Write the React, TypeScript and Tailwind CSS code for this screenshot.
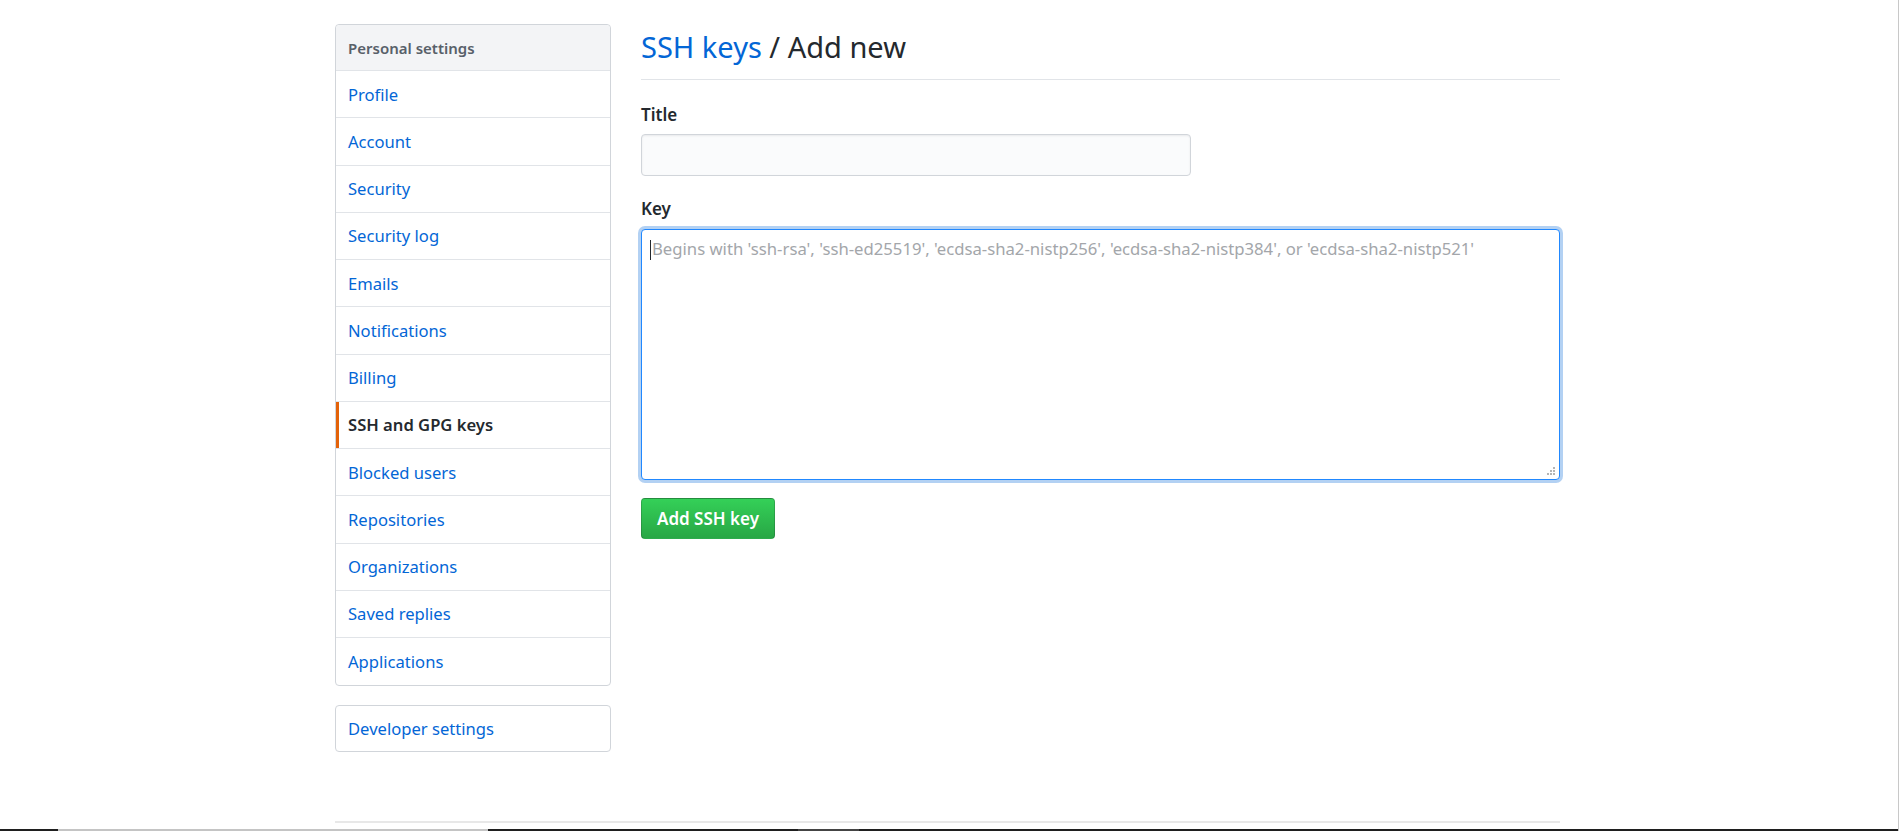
import React from 'react';

const menuItems = [
  'Profile',
  'Account',
  'Security',
  'Security log',
  'Emails',
  'Notifications',
  'Billing',
  'SSH and GPG keys',
  'Blocked users',
  'Repositories',
  'Organizations',
  'Saved replies',
  'Applications',
];

const font = { fontFamily: '"Segoe UI", "Noto Sans", Roboto, sans-serif' };

const Sidebar: React.FC = () => {
  return (
    <div className="w-[276px] shrink-0">
      <nav className="rounded-[4px] border border-[#d1d5da] bg-white">
        <div className="flex h-[46px] items-center rounded-t-[4px] border-b border-[#e1e4e8] bg-[#f3f4f6] pl-[12px] pt-[2px] text-[15px] font-semibold text-[#586069]">
          Personal settings
        </div>
        {menuItems.map((item, i) => {
          const active = item === 'SSH and GPG keys';
          return (
            <div
              key={item}
              className={`relative flex h-[47.25px] items-center pl-[12px] pt-[2px] text-[16.6px] ${
                i < menuItems.length - 1 ? 'border-b border-[#e1e4e8]' : ''
              } ${active ? 'font-semibold text-[#24292e]' : 'text-[#0366d6]'}`}
            >
              {active && <span className="absolute bottom-0 left-0 top-0 w-[3px] bg-[#e36209]" />}
              {item}
            </div>
          );
        })}
      </nav>
      <nav className="mt-[19px] flex h-[47px] items-center rounded-[4px] border border-[#d1d5da] bg-white pl-[12px] pt-[2px] text-[16.6px] text-[#0366d6]">
        Developer settings
      </nav>
    </div>
  );
};

const ResizeGrip: React.FC = () => (
  <svg className="absolute bottom-[3px] right-[3px]" width="10" height="10" viewBox="0 0 10 10">
    <rect x="7" y="1" width="2" height="2" fill="#b5b5b5" />
    <rect x="4" y="4" width="2" height="2" fill="#b5b5b5" />
    <rect x="7" y="4" width="2" height="2" fill="#b5b5b5" />
    <rect x="1" y="7" width="2" height="2" fill="#b5b5b5" />
    <rect x="4" y="7" width="2" height="2" fill="#b5b5b5" />
    <rect x="7" y="7" width="2" height="2" fill="#b5b5b5" />
  </svg>
);

const NewKeyForm: React.FC = () => {
  return (
    <div className="flex-1">
      <div className="flex h-[56px] items-start border-b border-[#e1e4e8]">
        <h2 className="text-[29px] font-normal leading-[46px] text-[#24292e]">
          <span className="text-[#0366d6]">SSH keys</span> / Add new
        </h2>
      </div>

      <label className="mt-[24px] block text-[17px] font-semibold leading-[21px] text-[#24292e]">Title</label>
      <input
        type="text"
        className="mt-[9px] block h-[42px] w-[550px] rounded-[4px] border border-[#d1d5da] bg-[#fafbfc] px-[10px] text-[17px] shadow-[inset_0_1px_2px_rgba(27,31,35,0.075)] outline-none"
      />

      <label className="mt-[22px] block text-[17px] font-semibold leading-[21px] text-[#24292e]">Key</label>
      <div className="relative mt-[10px] h-[251px] w-full rounded-[4px] border border-[#2188ff] bg-white shadow-[0_0_0_3px_rgba(3,102,214,0.3)]">
        <span className="absolute left-[8px] top-[10px] h-[20px] w-px bg-[#24292e]" />
        <textarea
          className="h-full w-full resize-none bg-transparent px-[10px] py-[7px] text-[16.7px] leading-[24px] text-[#24292e] outline-none placeholder:text-[#a3a6aa]"
          placeholder="Begins with 'ssh-rsa', 'ssh-ed25519', 'ecdsa-sha2-nistp256', 'ecdsa-sha2-nistp384', or 'ecdsa-sha2-nistp521'"
        />
        <ResizeGrip />
      </div>

      <button className="mt-[18px] flex h-[41px] w-[134px] items-center justify-center rounded-[4px] border border-[rgba(27,31,35,0.2)] bg-gradient-to-b from-[#34d058] to-[#28a745] text-[17px] font-semibold text-white">
        Add SSH key
      </button>
    </div>
  );
};

export default function App() {
  return (
    <div className="flex h-[831px] w-full flex-col overflow-hidden border-r border-[#c8c8c8] bg-white" style={font}>
      <div className="ml-[335px] mt-[24px] flex w-[1225px] gap-[30px]">
        <Sidebar />
        <NewKeyForm />
      </div>
      <div className="flex-1" />
      <div className="ml-[335px] w-[1225px] border-t-2 border-[#e8e8e8]" />
      <div className="mt-[6px] flex h-[2px] w-full">
        <div className="w-[58px] bg-[#1f1f1f]" />
        <div className="w-[430px] bg-[#c4c4c4]" />
        <div className="w-[310px] bg-[#1f1f1f]" />
        <div className="w-[61px] bg-[#444444]" />
        <div className="flex-1 bg-[#1f1f1f]" />
      </div>
    </div>
  );
}
